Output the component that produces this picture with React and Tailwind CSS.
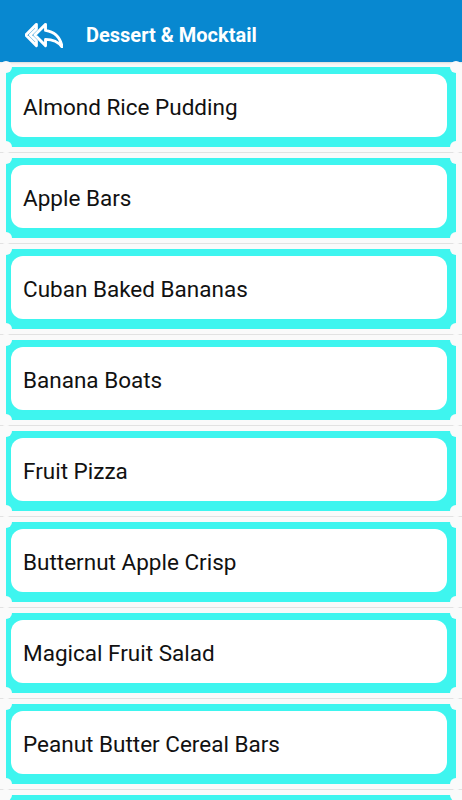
const items = [
  "Almond Rice Pudding",
  "Apple Bars",
  "Cuban Baked Bananas",
  "Banana Boats",
  "Fruit Pizza",
  "Butternut Apple Crisp",
  "Magical Fruit Salad",
  "Peanut Butter Cereal Bars",
  "Strawberry Shortcake",
];

const ReplyAllIcon = () => (
  <svg width="38" height="26" viewBox="-0.5 3.5 25 17" fill="none">
    <path
      d="M7 8V5l-7 7 7 7v-3l-4-4 4-4zm6 1V5l-7 7 7 7v-4.1c5 0 8.5 1.6 11 5.1-1-5-4-10-11-11z"
      stroke="white"
      strokeWidth="1.9"
      strokeLinejoin="round"
    />
  </svg>
);

const Card = ({ title }) => (
  <div className="relative h-[80px] bg-[#3ef5ef] pt-[7px] pl-[5px] pr-[9px] pb-[10px]">
    {/* notched corners */}
    <div className="absolute -top-[6px] -left-[6px] w-[12px] h-[12px] rounded-full bg-[#fafafa]" />
    <div className="absolute -top-[6px] -right-[6px] w-[12px] h-[12px] rounded-full bg-[#fafafa]" />
    <div className="absolute -bottom-[6px] -left-[6px] w-[12px] h-[12px] rounded-full bg-[#fafafa]" />
    <div className="absolute -bottom-[6px] -right-[6px] w-[12px] h-[12px] rounded-full bg-[#fafafa]" />
    <div className="h-full bg-white rounded-[12px] flex items-center pl-[12px] pt-[4px]">
      <span className="text-[22.5px] text-[#111] leading-none">{title}</span>
    </div>
  </div>
);

export default function App() {
  return (
    <div
      className="w-[462px] min-h-[800px] bg-[#fafafa]"
      style={{ fontFamily: "Roboto, 'Liberation Sans', sans-serif" }}
    >
      <div className="h-[62px] bg-[#0888d0] flex items-center pl-[25px] pt-[7px] shadow-sm">
        <ReplyAllIcon />
        <h1 className="ml-[23px] text-white font-bold text-[20px] leading-none">Dessert &amp; Mocktail</h1>
      </div>
      <div className="flex flex-col">
        {items.map((item) => (
          <div key={item} className="border-b border-[#e2e2e2]">
            <div className="px-[6px] py-[5px]">
              <Card title={item} />
            </div>
          </div>
        ))}
      </div>
    </div>
  );
}
